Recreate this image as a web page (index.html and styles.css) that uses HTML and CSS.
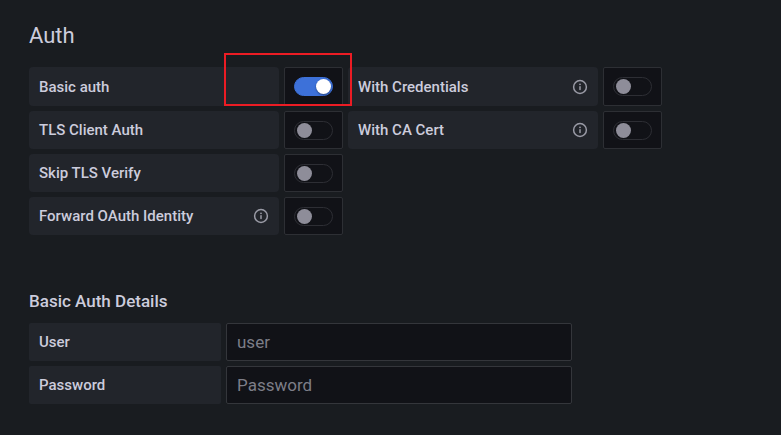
FILE: index.html
```html
<!DOCTYPE html>
<html lang="en">
<head>
<meta charset="utf-8">
<title>Auth</title>
<link rel="stylesheet" href="styles.css">
</head>
<body>
<svg class="sprite" aria-hidden="true">
  <symbol id="info" viewBox="0 0 16 16">
    <circle cx="8" cy="8" r="6.4" fill="none" stroke="currentColor" stroke-width="1.5"/>
    <path d="M8 7.8V10.6" fill="none" stroke="currentColor" stroke-width="1.5" stroke-linecap="round"/>
    <circle cx="8" cy="5.3" r=".9" fill="currentColor"/>
  </symbol>
</svg>
<main>
  <section class="auth">
    <h1>Auth</h1>
    <div class="rows">
      <div class="row">
        <div class="field highlighted">
          <label class="name" for="basic">Basic auth</label>
          <span class="box"><input class="switch" type="checkbox" id="basic" checked></span>
        </div>
        <div class="field">
          <label class="name" for="credentials">With Credentials <svg class="info"><use href="#info"/></svg></label>
          <span class="box"><input class="switch" type="checkbox" id="credentials"></span>
        </div>
      </div>
      <div class="row">
        <div class="field">
          <label class="name" for="tls">TLS Client Auth</label>
          <span class="box"><input class="switch" type="checkbox" id="tls"></span>
        </div>
        <div class="field">
          <label class="name" for="ca">With CA Cert <svg class="info"><use href="#info"/></svg></label>
          <span class="box"><input class="switch" type="checkbox" id="ca"></span>
        </div>
      </div>
      <div class="row">
        <div class="field">
          <label class="name" for="skip">Skip TLS Verify</label>
          <span class="box"><input class="switch" type="checkbox" id="skip"></span>
        </div>
      </div>
      <div class="row">
        <div class="field">
          <label class="name" for="oauth">Forward OAuth Identity <svg class="info"><use href="#info"/></svg></label>
          <span class="box"><input class="switch" type="checkbox" id="oauth"></span>
        </div>
      </div>
    </div>
  </section>
  <section class="details">
    <h2>Basic Auth Details</h2>
    <div class="rows">
      <div class="entry">
        <label class="name" for="user">User</label>
        <input class="text" type="text" id="user" placeholder="user">
      </div>
      <div class="entry">
        <label class="name" for="password">Password</label>
        <input class="text" type="password" id="password" placeholder="Password">
      </div>
    </div>
  </section>
</main>
</body>
</html>
```
FILE: styles.css
```css
*,
*::before,
*::after {
  box-sizing: border-box;
}

body {
  margin: 0;
  background: #191c20;
  color: #ccccdc;
  font: 15px/20px Roboto, "Liberation Sans", sans-serif;
}

.sprite {
  display: none;
}

main {
  padding: 20px 29px;
}

h1 {
  margin: 0 0 15px;
  font-size: 22px;
  line-height: 32px;
  font-weight: 400;
}

h2 {
  margin: 0 0 10px;
  font-size: 17px;
  line-height: 24px;
  font-weight: 500;
}

.details {
  margin-top: 54px;
}

.rows {
  display: grid;
  gap: 5px;
}

.auth .rows {
  grid-template-rows: 39px;
}

.row,
.field,
.entry {
  display: flex;
  gap: 5px;
}

.field {
  position: relative;
}

.name {
  display: flex;
  align-items: center;
  justify-content: space-between;
  width: 250px;
  min-height: 38px;
  padding: 0 10px;
  border-radius: 4px;
  background: #22252b;
  font-weight: 500;
}

.entry .name {
  width: 192px;
  border-radius: 2px;
}

.info {
  width: 16px;
  height: 16px;
  color: #9a9ba6;
}

.box {
  display: flex;
  align-items: center;
  justify-content: center;
  width: 59px;
  min-height: 38px;
  border: 1px solid #2d2f34;
  border-radius: 2px;
  background: #111217;
}

.switch {
  appearance: none;
  display: flex;
  align-items: center;
  width: 39px;
  height: 19px;
  margin: 0;
  padding: 0 2px;
  border: 1px solid #2d2e34;
  border-radius: 10px;
  background: #111217;
}

.switch::before {
  content: "";
  width: 15px;
  height: 15px;
  border-radius: 50%;
  background: #8e8d99;
}

.switch:checked {
  justify-content: flex-end;
  padding: 0 1px;
  border-color: #3d71d9;
  background: #3d71d9;
}

.switch:checked::before {
  background: #fff;
  box-shadow: 0 1px 2px rgba(0, 0, 0, 0.4);
}

.text {
  width: 346px;
  height: 38px;
  padding: 0 10px;
  border: 1px solid #34363b;
  border-radius: 2px;
  background: #111217;
  color: #ccccdc;
  font: 17px/24px Roboto, "Liberation Sans", sans-serif;
}

.text::placeholder {
  color: #7d7e88;
}

/* Callout frame around the active switch */
.highlighted::after {
  content: "";
  position: absolute;
  top: -14px;
  right: -9px;
  bottom: 0;
  width: 128px;
  border: 2px solid #ec1c24;
  z-index: 1;
  pointer-events: none;
}
```
